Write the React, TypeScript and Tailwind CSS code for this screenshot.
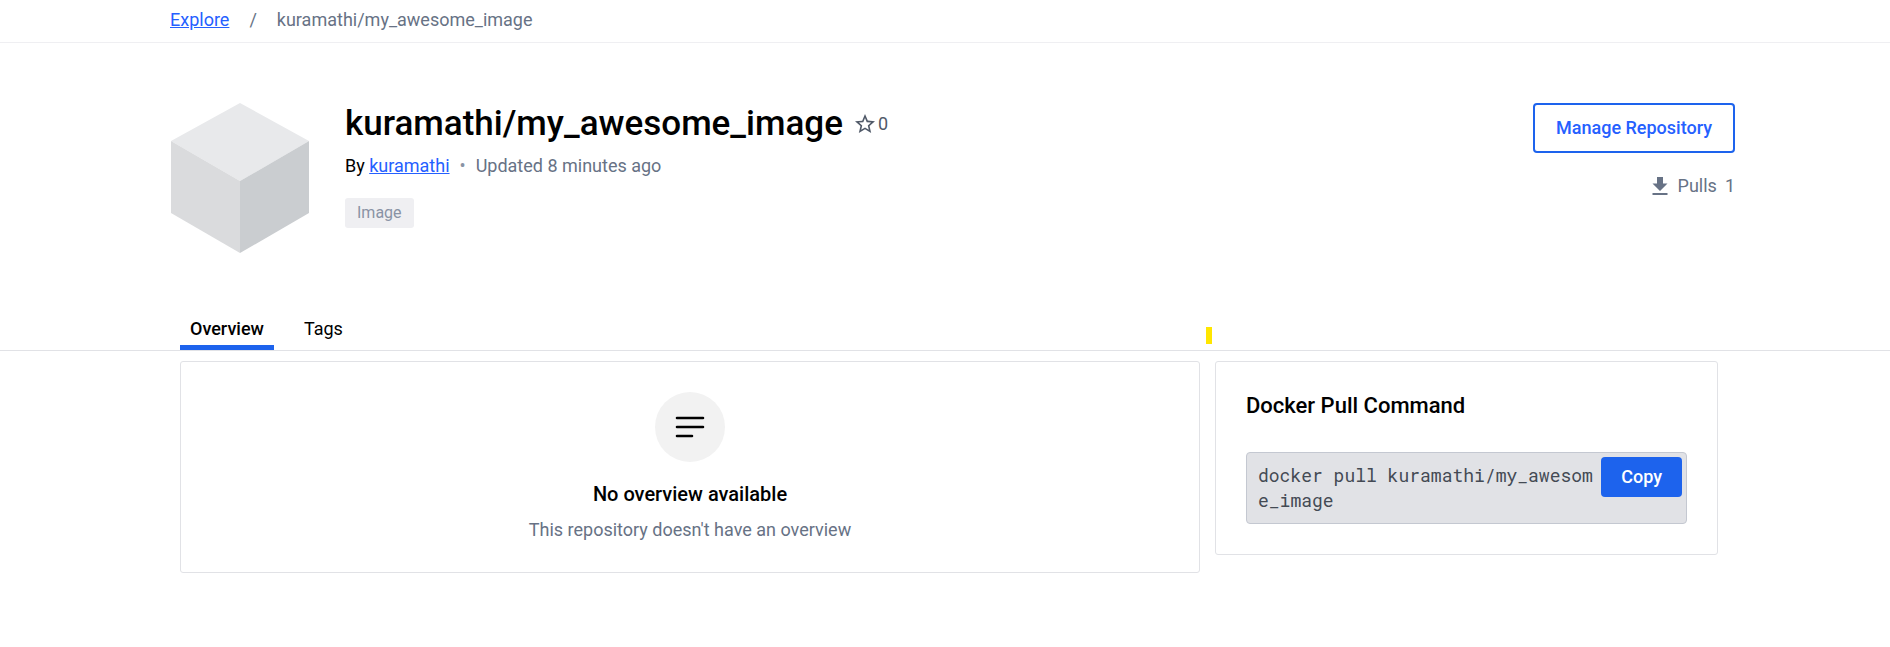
function CubeLogo() {
  return (
    <svg className="h-[150px] w-[140px] shrink-0" viewBox="0 0 140 150" aria-hidden="true">
      <path d="M70 0 139 38 70 78 1 38Z" fill="#e8e9eb" />
      <path d="M1 38 70 78V150L1 110Z" fill="#dadbdd" />
      <path d="M139 38 70 78V150L139 110Z" fill="#cacdd0" />
    </svg>
  );
}

function StarIcon() {
  return (
    <svg className="size-6" viewBox="0 0 24 24" fill="#505968" aria-hidden="true">
      <path d="m22 9.24-7.19-.62L12 2 9.19 8.63 2 9.24l5.46 4.73L5.82 21 12 17.27 18.18 21l-1.63-7.03L22 9.24zM12 15.4l-3.76 2.27 1-4.28-3.32-2.88 4.38-.38L12 6.1l1.71 4.04 4.38.38-3.32 2.88 1 4.28L12 15.4z" />
    </svg>
  );
}

function DownloadIcon() {
  return (
    <svg className="size-6" viewBox="0 0 24 24" fill="#677285" aria-hidden="true">
      <path d="M19.5 9.5H15V3H9v6.5H4.5L12 17l7.5-7.5zM4.5 19v2h15v-2h-15z" />
    </svg>
  );
}

function NotesIcon() {
  return (
    <svg className="h-[22px] w-[30px]" viewBox="0 0 30 22" stroke="#000" strokeWidth="2.6" strokeLinecap="round" aria-hidden="true">
      <path d="M2 2h26M2 11h26M2 20h15" />
    </svg>
  );
}

export default function App() {
  return (
    <div className="font-[Roboto,sans-serif] text-lg leading-6 text-black">
      <nav aria-label="Breadcrumb" className="border-b border-[#efeff2] pt-2 pb-[10px] pl-[170px]">
        <ol className="flex gap-5 text-[#677285]">
          <li><a href="#explore" className="text-[#2560ff] underline">Explore</a></li>
          <li aria-hidden="true">/</li>
          <li>kuramathi/my_awesome_image</li>
        </ol>
      </nav>

      <header className="flex items-start pt-[60px] pr-[155px] pl-[170px]">
        <CubeLogo />
        <div className="ml-[35px] flex-1">
          <div className="flex items-center gap-[10px]">
            <h1 className="text-[35px] leading-[42px] font-medium">kuramathi/my_awesome_image</h1>
            <div className="flex items-center gap-px text-[#505968]">
              <StarIcon />
              <span>0</span>
            </div>
          </div>
          <p className="mt-[9px] flex text-[#677285]">
            <span className="text-black">By <a href="#kuramathi" className="text-[#2560ff] underline">kuramathi</a></span>
            <span className="mx-[10px] text-[#8993a5]">•</span>
            <span>Updated 8 minutes ago</span>
          </p>
          <span className="mt-5 inline-block rounded-[3px] bg-[#efeff2] px-3 py-[3px] text-base text-[#8993a5]">Image</span>
        </div>
        <div className="flex flex-col items-end">
          <button type="button" className="rounded border-2 border-[#1d63ed] px-[21px] py-[11px] font-medium text-[#2560ff]">
            Manage Repository
          </button>
          <p className="mt-[21px] flex items-center text-[#677285]">
            <DownloadIcon />
            <span className="ml-[6px]">Pulls</span>
            <span className="ml-2">1</span>
          </p>
        </div>
      </header>

      <div className="mt-16 flex items-start border-b border-[#e1e2e6] pl-[180px]">
        <div role="tablist" className="flex">
          <button type="button" role="tab" aria-selected="true" className="border-b-[5px] border-[#1d63ed] px-[10px] pb-[4px] font-medium">Overview</button>
          <button type="button" role="tab" aria-selected="false" className="ml-5 px-[10px] pb-[9px]">Tags</button>
        </div>
      </div>

      <main className="relative grid grid-cols-[1020fr_503fr] items-start gap-[15px] pt-[10px] pr-[172px] pl-[180px]">
        <span className="absolute -top-6 left-[1206px] h-[17px] w-[6px] bg-[#ffe600]" />
        <section className="flex flex-col items-center rounded-[3px] border border-[#e1e2e6] py-[30px]">
          <div className="flex size-[70px] items-center justify-center rounded-full bg-[#f2f2f2]">
            <NotesIcon />
          </div>
          <h2 className="mt-5 text-xl leading-6 font-medium">No overview available</h2>
          <p className="mt-3 text-[#677285]">This repository doesn't have an overview</p>
        </section>
        <section className="rounded-[3px] border border-[#e1e2e6] p-[30px]">
          <h2 className="text-[22px] leading-7 font-medium">Docker Pull Command</h2>
          <div className="mt-8 flex items-start rounded border border-[#c4c8d1] bg-[#e1e2e6] p-[4px]">
            <code className="min-w-0 flex-1 py-[6px] pl-[7px] font-['Roboto_Mono','Liberation_Mono',monospace] leading-[25px] break-all text-[#444a54]">
              docker pull kuramathi/my_awesome_image
            </code>
            <button type="button" className="rounded bg-[#1d63ed] px-5 py-2 font-medium text-white">Copy</button>
          </div>
        </section>
      </main>
    </div>
  );
}
